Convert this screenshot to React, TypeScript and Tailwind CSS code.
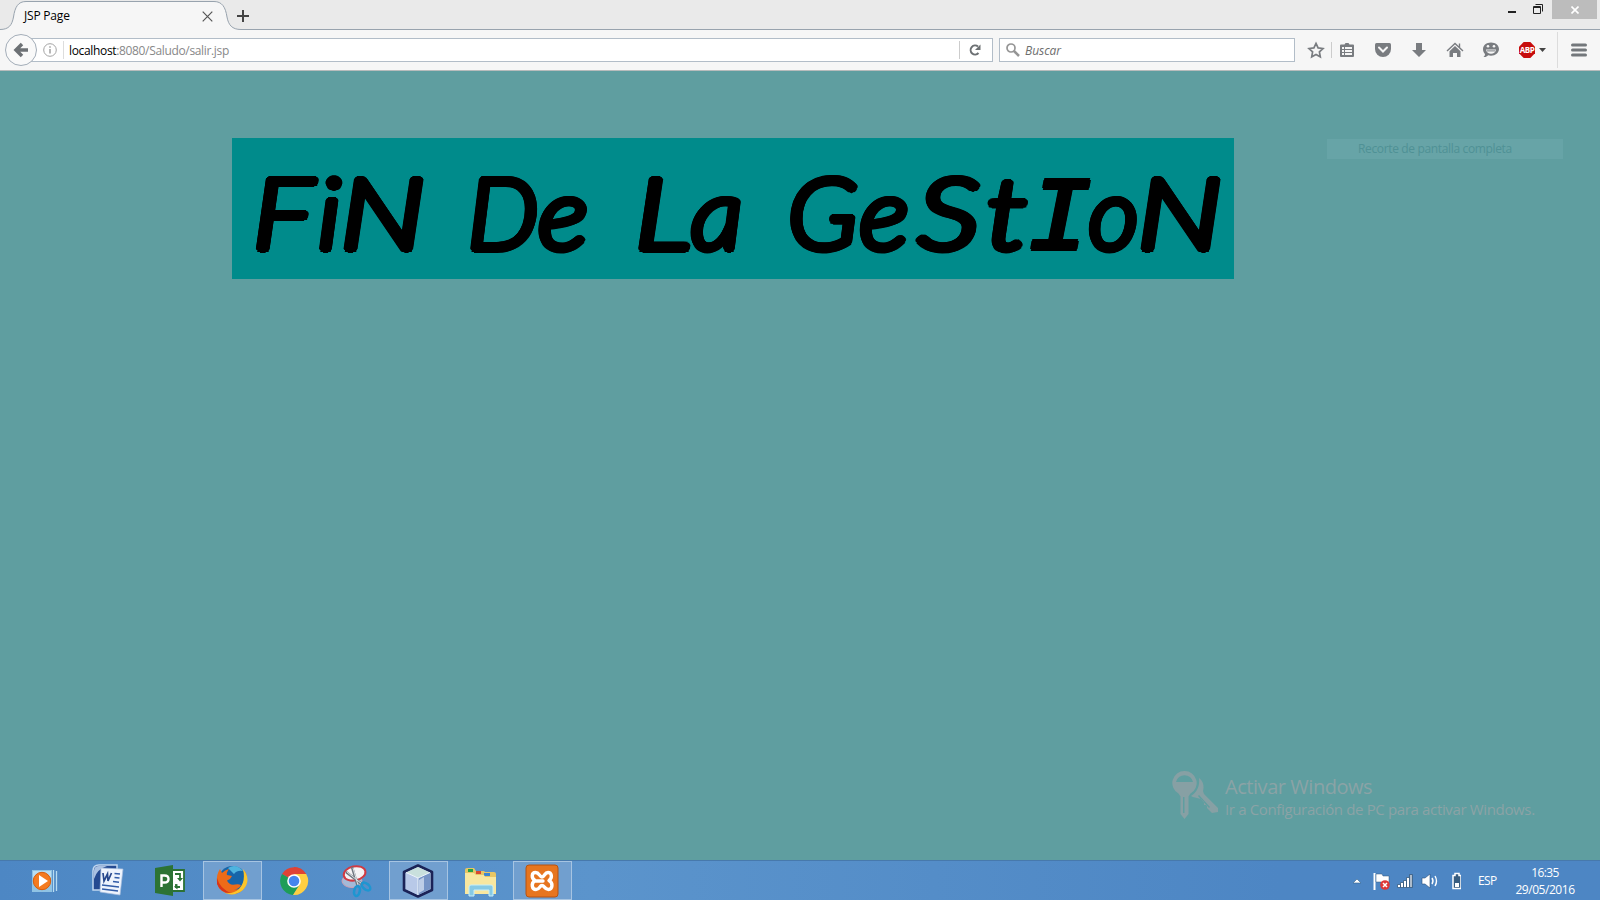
import type { ReactNode } from "react";

const ui = "font-['Segoe_UI','Open_Sans','Noto_Sans',sans-serif]";

function TabStrip() {
  return (
    <header className="relative flex h-[30px] shrink-0 items-start bg-[#eaeaea]">
      <svg className="absolute inset-0" width="1600" height="30" fill="none">
        <path d="M0 29.5C9 29.5 12 25 13.5 17C15 7 18 1.5 26 1.5H214C222 1.5 225.500 7 227 17C228.500 25 232 29.500 241 29.500H1600V30H0Z" fill="#f6f6f6" />
        <path d="M0 29.5C9 29.5 12 25 13.5 17C15 7 18 1.5 26 1.5H214C222 1.5 225.5 7 227 17C228.5 25 232 29.5 241 29.5H1600" stroke="#98a3ae" />
      </svg>
      <div className="relative flex h-[30px] w-[227px] items-center justify-between pr-[14px] pl-[24px] pt-[2px]">
        <span className="text-[12px] tracking-[-0.2px] text-black">JSP Page</span>
        <svg width="11" height="11" stroke="#555" strokeWidth="1.2"><path d="M.7.7l9.600 9.600M10.300.7L.7 10.300" /></svg>
      </div>
      <svg className="relative mt-[10px] ml-[10px]" width="12" height="12" stroke="#444" strokeWidth="2"><path d="M6 0v12M0 6h12" /></svg>
      <div className="relative ml-auto flex h-[19px] items-start pr-[3px]">
        <svg className="mt-[3px] mr-[8px]" width="36" height="13" fill="none">
          <path d="M0 9h8" stroke="#222" strokeWidth="2" />
          <path d="M25.500 3.500h7v7h-7zM25 4.500h8M27.500 1.500h7v7" stroke="#222" />
        </svg>
        <div className="flex h-[19px] w-[45px] items-center justify-center bg-[#bcbcbc]">
          <svg width="8" height="8" stroke="#fff" strokeWidth="1.600"><path d="M.5.5l7 7M7.500.5l-7 7" /></svg>
        </div>
      </div>
    </header>
  );
}

function ToolIcon({ children, w = 36 }: { children: ReactNode; w?: number }) {
  return (
    <div className="flex shrink-0 justify-center" style={{ width: w }}>
      <svg width="18" height="18" viewBox="0 0 18 18" fill="#797c80">{children}</svg>
    </div>
  );
}

function NavBar() {
  return (
    <nav className="flex h-[41px] shrink-0 items-center border-b border-[#b8bcbc] bg-[#f6f6f6]">
      <svg className="relative z-10 ml-[5px] shrink-0" width="32" height="32" fill="none">
        <circle cx="16" cy="16" r="15.500" fill="#f9f9f9" stroke="#a3adb8" />
        <path d="M23 16H12M17 10l-6 6 6 6" stroke="#6d7175" strokeWidth="3.500" />
      </svg>
      <div className="-ml-[7px] flex h-6 w-[963px] shrink-0 items-center border border-[#b2bdc8] bg-white">
        <svg className="ml-[12px] shrink-0" width="14" height="14" fill="none">
          <circle cx="7" cy="7" r="6.300" stroke="#a4a4a4" />
          <path d="M7 6v4.500M7 3.200v1.600" stroke="#a0a0a0" strokeWidth="1.500" />
        </svg>
        <div className="ml-[6px] h-[18px] w-px bg-[#ddd]" />
        <span className="ml-[5px] pt-[2px] text-[12px] tracking-[-0.34px] text-[#888]"><span className="text-black">localhost</span>:8080/Saludo/salir.jsp</span>
        <div className="ml-auto h-[18px] w-px bg-[#ccc]" />
        <svg className="mr-[11px] ml-[9px] shrink-0" width="12" height="12" fill="none">
          <path d="M9 2.500A4.500 4.500 0 1 0 9.500 9" stroke="#6c7073" strokeWidth="2" />
          <path d="M11.500.5v5.500H6z" fill="#6c7073" />
        </svg>
      </div>
      <div className="ml-[6px] flex h-6 w-[296px] shrink-0 items-center border border-[#b2bdc8] bg-white">
        <svg className="ml-[6px]" width="14" height="14" fill="none" stroke="#959595"><circle cx="5" cy="5" r="4" strokeWidth="1.700" /><path d="M8 8l5 5" strokeWidth="2.500" /></svg>
        <span className="ml-[5px] pt-[2px] text-[12px] tracking-[-0.05px] text-[#6e6e6e] italic">Buscar</span>
      </div>
      <div className="ml-[4px] flex items-center">
        <ToolIcon w={33}><path d="M9 2.400l2.100 4.500 4.900.6-3.600 3.400.9 4.900L9 13.400l-4.300 2.400.9-4.900L2 7.500l4.900-.6z" fill="none" stroke="#797c80" strokeWidth="1.700" /></ToolIcon>
        <div className="-ml-px h-4 w-px bg-[#ccc]" />
        <ToolIcon w={30}>
          <path fillRule="evenodd" d="M3 3.500h3.500l1-1.500h3l1 1.500H15q1 0 1 1V15q0 1-1 1H3q-1 0-1-1V4.500q0-1 1-1zM4 6v2h2V6zm3 0v2h7V6zM4 9v2h2V9zm3 0v2h7V9zm-3 3v2h2v-2zm3 0v2h7v-2z" />
        </ToolIcon>
        <div className="w-[3px]" />
        <ToolIcon><path d="M1 3.500Q1 2 2.500 2h13Q17 2 17 3.500V8A8 8 0 0 1 1 8z" /><path d="M5 6.500l4 4 4-4" fill="none" stroke="#f6f6f6" strokeWidth="2" strokeLinecap="round" /></ToolIcon>
        <ToolIcon><path d="M6 2h6v7h4l-7 7-7-7h4z" /></ToolIcon>
        <ToolIcon><path d="M3.500 10.200L9 5l5.500 5.200V16H11v-4H7v4H3.500z" /><path d="M1 10l8-7.500 8 7.500M13.500 2.500v4" fill="none" stroke="#797c80" strokeWidth="1.400" /></ToolIcon>
        <ToolIcon><path d="M9 1.500c4.500 0 8 2.800 8 6.500s-3.500 6.700-8 6.700c-1 0-2-.1-2.900-.4C5 15.600 3.500 16.300 1.500 16c1-.8 1.500-1.800 1.500-3C1.700 11.700 1 10 1 8c0-3.700 3.500-6.500 8-6.500z" /><path d="M4 8.500h10c-.5 3-2.500 4.300-5 4.300S4.500 11.500 4 8.500z" fill="#f6f6f6" /><circle cx="6" cy="5.300" r="1.300" fill="#f6f6f6" /><circle cx="12" cy="5.300" r="1.300" fill="#f6f6f6" /><path d="M5 9.900h8" stroke="#797c80" /></ToolIcon>
        <div className="relative flex w-[36px] justify-center">
          <svg width="18" height="18"><path d="M5.700 1h6.600L17 5.700v6.600L12.300 17H5.700L1 12.300V5.700z" fill="#c70d0d" /></svg>
          <span className="absolute inset-0 flex items-center justify-center font-['Open_Sans',sans-serif] text-[8px] font-bold tracking-[-0.5px] text-white">ABP</span>
        </div>
      </div>
      <svg className="-ml-[7px] shrink-0" width="9" height="5"><path d="M1 0h7L4.500 4z" fill="#444" /></svg>
      <div className="ml-[10px] h-[36px] w-px bg-[#dcdcdc]" />
      <svg className="ml-[13px] shrink-0" width="16" height="14" stroke="#73777b" strokeWidth="3" strokeLinecap="round"><path d="M1.500 2h13M1.500 7h13M1.500 12h13" /></svg>
    </nav>
  );
}

type Glyph = [string, number, number, string?];

const headline: Glyph[][] = [
  [["F", 64, 1.16], ["i", 28, 1.1], ["N", 80, 1.22]],
  [["D", 68, 1.01], ["e", 53, 1.08]],
  [["L", 55, 1.22], ["a", 52, 1.05]],
  [["G", 69, 1.04], ["e", 55, 1.07], ["S", 73, 1.27], ["t", 43, 1.2], ["I", 62, 1.02, "m"], ["o", 47, 0.98], ["N", 85, 1.22]],
];

const rounded =
  "[text-shadow:3.5px_0_0_#000,3.2px_1.3px_0_#000,2.5px_2.5px_0_#000,1.3px_3.2px_0_#000,0_3.5px_0_#000,-1.3px_3.2px_0_#000,-2.5px_2.5px_0_#000,-3.2px_1.3px_0_#000,-3.5px_0_0_#000,-3.2px_-1.3px_0_#000,-2.5px_-2.5px_0_#000,-1.3px_-3.2px_0_#000,0_-3.5px_0_#000,1.3px_-3.2px_0_#000,2.5px_-2.5px_0_#000,3.2px_-1.3px_0_#000]";

const roundedThin =
  "[text-shadow:2.4px_0_0_#000,1.7px_1.7px_0_#000,0_2.4px_0_#000,-1.7px_1.7px_0_#000,-2.4px_0_0_#000,-1.7px_-1.7px_0_#000,0_-2.4px_0_#000,1.7px_-1.7px_0_#000]";

function Headline() {
  return (
    <h1 className="ml-[232px] mt-[67px] flex h-[141px] w-[1002px] shrink-0 items-baseline bg-[#008b8b] pl-[19px] pt-[2px] font-['Lato',sans-serif] text-[99px] leading-[141px] font-light text-black italic">
      {headline.map((word, i) => (
        <span key={i} className={["", "ml-[46px]", "ml-[46px]", "ml-[45px]"][i] + " flex shrink-0 items-baseline"}>
          {word.map(([c, w, s, m], j) => (
            <span key={j} className="flex shrink-0 items-baseline justify-center" style={{ width: w }}>
              <span className={m ? `block font-['Liberation_Mono',monospace] text-[104px] leading-[100px] ${roundedThin}` : `block ${rounded}`} style={{ transform: `scaleX(${s})` }}>{c}</span>
            </span>
          ))}
        </span>
      ))}
    </h1>
  );
}

function Watermark() {
  return (
    <div className="mt-auto mb-[40px] ml-[1172px] flex text-[#8ba3a6]">
      <svg width="46" height="50" fill="#87a0a4">
        <path fillRule="evenodd" d="M12.500 1a12 12 0 0 1 6 22.500l-2 3V44l-4 5-4-5V26.500l-2-3A12 12 0 0 1 12.500 1zM4 12h17A8.700 8.700 0 0 0 4 12zM11 27v16h1.500V27z" />
        <path fillRule="evenodd" d="M27 8c4 3 5.500 8 4 13l1 3 14 14v4l-6 1-5-5v-3h-3v-3l-3-3-4-1-4-1-2-1c6-4 9-10 8-18zM26 26l11 12 1-1-11-12z" />
      </svg>
      <div className="ml-[7px] mt-[4px] flex flex-col whitespace-nowrap">
        <span className="text-[20px] leading-[26px] tracking-[-0.45px]">Activar Windows</span>
        <span className="mt-[-1px] text-[15px] leading-[20px] tracking-[-0.35px]">Ir a Configuración de PC para activar Windows.</span>
      </div>
    </div>
  );
}

function Task({ active, children }: { active?: boolean; children: ReactNode }) {
  return (
    <div className={"flex h-[39px] w-[59px] items-center justify-center border pr-[2px] " + (active ? "border-[#a6c4e2] bg-[#719fcf]" : "border-transparent")}>
      <svg width="34" height="34" viewBox="0 0 34 34">{children}</svg>
    </div>
  );
}

function Taskbar() {
  return (
    <footer className="flex h-10 shrink-0 items-start border-t border-[#4779ac] bg-linear-to-r from-[#4d87c4] via-[#5b94cc] via-[37%] to-[#4d86c4] to-[80%] pl-[17px]">
      <div className="flex gap-[3px]">
        <Task>
          <path d="M3 6h20v22H3z" fill="#8fc3e4" /><path d="M4 7h18v7H4z" fill="#b9def2" /><path d="M24.500 6v22M27.500 7v20" stroke="#b7dcf2" strokeWidth="1.300" />
          <circle cx="13" cy="17" r="8.700" fill="#f47b20" stroke="#d85d0b" /><path d="M10 11l9 6-9 6z" fill="#fff" />
        </Task>
        <Task>
          <path d="M2 26V7q0-6 6-6h18v25z" fill="#244a91" stroke="#c1d7ef" strokeWidth="1.500" /><path d="M3 15V7q0-5 5-5h8q-10 3-13 13z" fill="#a9c1e2" />
          <path d="M10 4l22 1-3 26-20-3z" fill="#eef4fd" stroke="#a7bddd" strokeWidth=".7" />
          <path d="M12 9l1 8 3.500-7 .5 7 3.500-8" fill="none" stroke="#26478c" strokeWidth="1.700" /><path d="M23.500 9.500l5.500.5M23.500 13.500l5 .5M22 17.500l6 .7M11 21l17 2M11 25l16 2" stroke="#315ca7" strokeWidth="1.600" />
        </Task>
        <Task>
          <path d="M19 6h12v21H19z" fill="#fff" stroke="#2b7134" strokeWidth="1.800" /><path d="M2 4l18-3v31L2 29z" fill="#2c7334" />
          <path d="M22 10h5v5M27 23h-4v-3" fill="none" stroke="#2c7334" strokeWidth="1.800" /><path d="M24 14h6l-3 3.500zM24.500 20v5.500l-3.500-2.700z" fill="#2c7334" />
          <path d="M8.500 23V11.500h3q4 0 4 3.500t-4 3.500h-3" fill="none" stroke="#fff" strokeWidth="2.400" />
        </Task>
        <Task active>
          <circle cx="17.500" cy="16" r="14" fill="#1765a9" /><path d="M13 4q8-5 15 3-6-1-9 3z" fill="#4fb4df" />
          <path d="M29 6q5 7 2 15a15 14 0 0 1-29-3Q1 11 5 5l2 4q3-3 7-4-3 4-2 6l5 1-2 3-3 1.500q2 5 8 4 4-1 6 1-3 4-7 4 8 1 11-7 1-6-1-12z" fill="#ed6b18" />
          <path d="M28 5q9 11 0 21-9 7-18 3 9 1 14-4 7-7 4-20z" fill="#fac52b" /><path d="M2 14q3 11 14 15-11 0-14-9z" fill="#d83519" />
        </Task>
        <Task>
          <path d="M17 17L5 10a14 14 0 0 1 24 0z" fill="#df4335" /><path d="M17 17L5 10a14 14 0 0 0 11 21l7-11z" fill="#1e9d57" /><path d="M17 10h12.200A14 14 0 0 1 16 31l7-11z" fill="#ffcf43" />
          <path d="M17 3a14 14 0 0 1 12 7H17z" fill="#df4335" /><circle cx="17" cy="17" r="6.800" fill="#fff" /><circle cx="17" cy="17" r="5.300" fill="#4585ee" />
        </Task>
        <Task>
          <ellipse cx="13" cy="17" rx="10" ry="6.500" fill="#a4bad8" stroke="#d0a0b4" /><ellipse cx="15.500" cy="9.500" rx="11" ry="7" fill="#f4f3f5" stroke="#d23a42" strokeWidth="2" transform="rotate(-12 15 9)" />
          <path d="M7 8l17 13M13 3l6 20" stroke="#6f7780" strokeWidth="2.600" /><path d="M8 8l15 12M14 4l5 17" stroke="#e1e4e7" />
          <ellipse cx="18" cy="27" rx="2.800" ry="5" fill="none" stroke="#1e96d1" strokeWidth="2.600" transform="rotate(12 18 27)" /><ellipse cx="27" cy="22.500" rx="2.800" ry="5" fill="none" stroke="#1e96d1" strokeWidth="2.600" transform="rotate(-50 27 22.500)" />
        </Task>
        <Task active>
          <path d="M17 1.500L31 8v18l-14 6.500L3 26V8z" fill="#a8bfdf" stroke="#1b2357" strokeWidth="2.600" strokeLinejoin="round" />
          <path d="M5 8.500L17 3l12 5.500L17 14z" fill="#c9e0dd" /><path d="M17 14v17L5 25V8.500z" fill="#b8c9e8" /><path d="M17 14v17l12-6V8.500z" fill="#7694c6" /><path d="M18 16v13l5-3V13z" fill="#dce6f5" opacity=".7" /><path d="M5 8.500l12 5.500 12-5.500M17 14v17" fill="none" stroke="#edf4fb" />
        </Task>
        <Task>
          <path d="M2 6q0-2 2-2h7l2 3h8l1 1h9q2 0 2 2v20H2z" fill="#e7c665" /><path d="M5 5h5v3H5z" fill="#26a344" /><path d="M13 7h5v3h-5z" fill="#d94831" /><path d="M21 9h6v3h-6z" fill="#3c86d3" />
          <path d="M2 9h9l2 2h8l1 2h11v17H2z" fill="#f8e7a0" /><path d="M6 32V23q0-2 2-2h20q2 0 2 2v9h-4v-6H11v6z" fill="#87cae5" stroke="#c8eff9" />
        </Task>
        <Task active>
          <rect x="1" y="1" width="32" height="32" rx="3" fill="#e7751f" stroke="#b65312" />
          <path d="M10 16.500C6 14 6.500 8.500 10.500 8.500S14.500 13 17 13 19.500 8.500 23 8.500 28 13.500 24 16.500C28.500 19 27.500 25.500 23.500 25.500S19.500 21.500 17 21.500 15 25.500 11 25.500 5.500 19.500 10 16.500ZM10 17H18" fill="none" stroke="#fff" strokeWidth="3.400" strokeLinecap="round" strokeLinejoin="round" />
        </Task>
      </div>
      <div className="ml-auto flex h-[39px] items-center text-[12px] text-white">
        <svg width="109" height="20" fill="none">
          <path d="M1 12l4-4 4 4z" fill="#fff" stroke="#32638f" strokeWidth=".6" />
          <path d="M22.500 2v17" stroke="#fff" strokeWidth="2" /><path d="M24 3h6l1 2h6v8h-7l-1-2h-5z" fill="#fff" stroke="#31547a" strokeWidth=".5" /><circle cx="33" cy="14" r="4.800" fill="#df3737" /><path d="M31 12l4 4M35 12l-4 4" stroke="#fff" strokeWidth="1.500" />
          <path d="M45.500 13.500h3v3h-3zM48.500 11.500h3v5h-3zM51.500 9.500h3v7h-3zM54.500 6.500h3v10h-3z" fill="#fff" stroke="#33597f" strokeWidth=".8" /><path d="M57.500 3.500h3v13h-3z" fill="#aebccb" stroke="#33597f" strokeWidth=".8" />
          <path d="M70 7h3l5-4v14l-5-4h-3z" fill="#fff" stroke="#294f78" strokeWidth=".6" /><path d="M80 7q2 3 0 6M83 5q3 5 0 10" stroke="#fff" strokeWidth="1.400" />
          <path d="M101 4.500h2v-2h4v2h2v13h-8z" fill="#385d80" stroke="#fff" strokeWidth="1.500" /><path d="M103 12h4v4h-4z" fill="#fff" />
        </svg>
        <span className="ml-[17px] w-[20px] tracking-[-0.600px]">ESP</span>
        <div className="mr-[25px] ml-[17px] flex w-[60px] flex-col items-center leading-[17px]">
          <span className="tracking-[-0.600px]">16:35</span><span className="tracking-[-0.450px]">29/05/2016</span>
        </div>
      </div>
    </footer>
  );
}

export default function App() {
  return (
    <div className={`flex h-[900px] w-[1600px] flex-col overflow-hidden ${ui}`}>
      <TabStrip />
      <NavBar />
      <main className="relative flex min-h-0 flex-1 flex-col bg-[#5f9ea0]">
        <Headline />
        <div className="absolute top-[68px] left-[1327px] flex h-[20px] w-[236px] items-center bg-[#67a4a7] pl-[31px] text-[12px] tracking-[-0.35px] whitespace-nowrap text-[#4f9195]">Recorte de pantalla completa</div>
        <Watermark />
      </main>
      <Taskbar />
    </div>
  );
}
